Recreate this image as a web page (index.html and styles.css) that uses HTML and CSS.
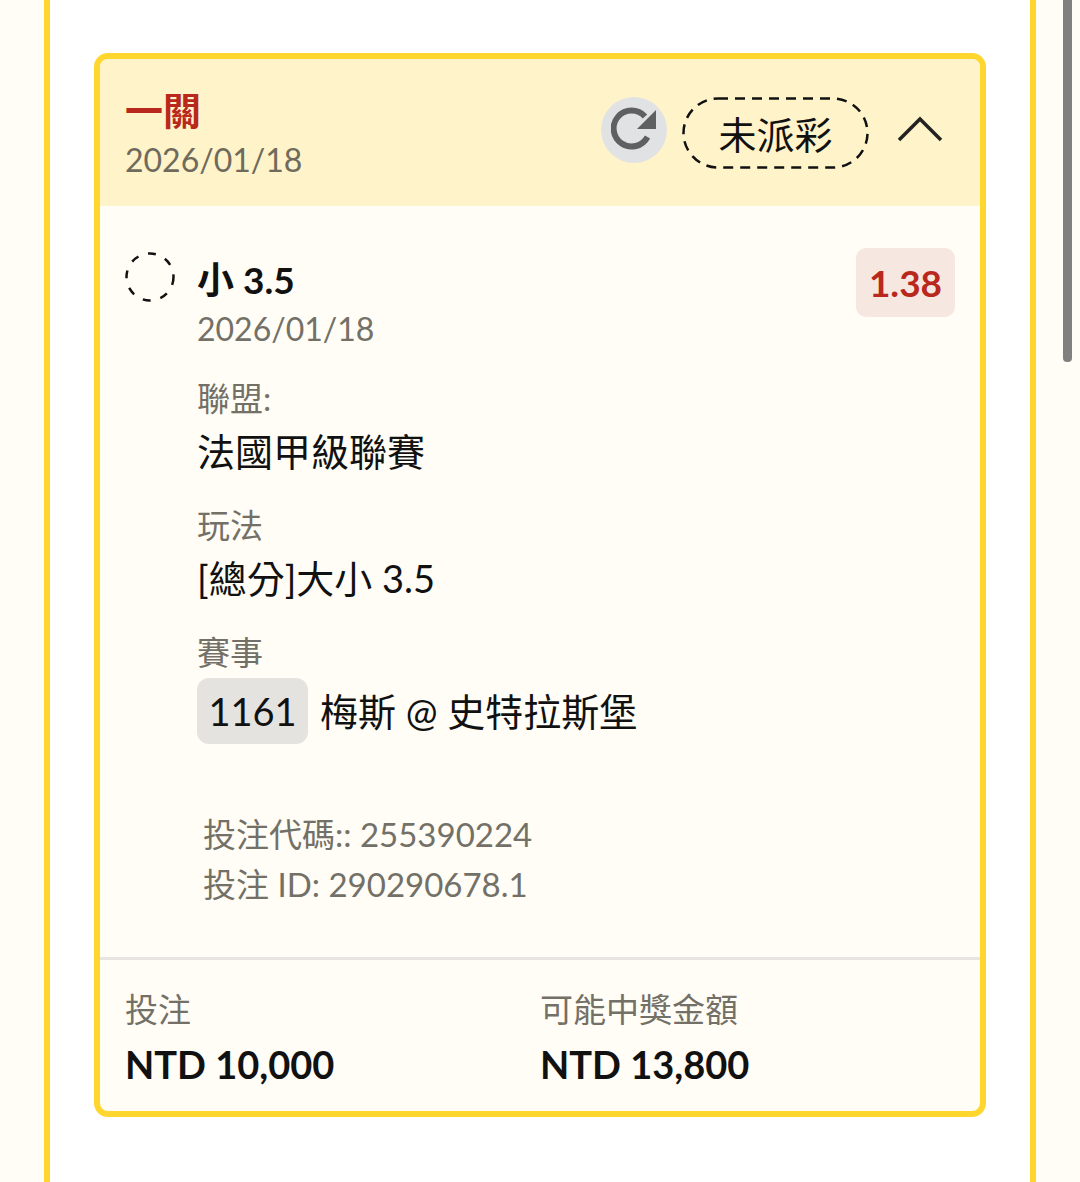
FILE: index.html
```html
<!DOCTYPE html>
<html>
  <head>
    <meta charset="utf-8">
    <meta name="viewport" content="width=device-width, initial-scale=1">
    <title>Bet</title>
    <link rel="stylesheet" href="styles.css">
  </head>
  <body>
    <div class="scrollbar"></div>
    <div class="panel">
      <div class="card">
        <div class="card-head">
          <div class="head-left">
            <p class="bet-type">一關</p>
            <p class="head-date">2026/01/18</p>
          </div>
          <div class="head-right">
            <span class="refresh">
              <svg width="46" height="46" viewBox="0 0 46 46">
                <path d="M36.5 30A18 18 0 1 1 34 9.500" fill="none" stroke="#5f6062" stroke-width="6"/>
                <path d="M45 3V22H26Z" fill="#5f6062"/>
              </svg>
            </span>
            <span class="status">
              <svg class="status-line" width="187" height="72" viewBox="0 0 187 72">
                <rect x="1.500" y="1.500" width="184" height="69" rx="34.500" fill="none" stroke="#111" stroke-width="2.500" stroke-dasharray="10 7"/>
              </svg>
              未派彩
            </span>
            <svg class="chevron" width="48" height="26" viewBox="0 0 48 26">
              <path d="M3 24L24 3L45 24" fill="none" stroke="#222" stroke-width="3.500"/>
            </svg>
          </div>
        </div>
        <div class="card-body">
          <div class="selection">
            <svg class="pending" width="50" height="50" viewBox="0 0 50 50">
              <circle cx="25" cy="25" r="23.500" fill="none" stroke="#111" stroke-width="2.500" stroke-dasharray="8 10"/>
            </svg>
            <div class="selection-main">
              <div class="selection-top">
                <div>
                  <p class="pick">小 3.5</p>
                  <p class="pick-date">2026/01/18</p>
                </div>
                <span class="odds">1.38</span>
              </div>
              <p class="label">聯盟:</p>
              <p class="value">法國甲級聯賽</p>
              <p class="label">玩法</p>
              <p class="value">[總分]大小 3.5</p>
              <p class="label">賽事</p>
              <div class="match">
                <span class="match-no">1161</span>
                <span class="value">梅斯 @ 史特拉斯堡</span>
              </div>
              <div class="codes">
                <p>投注代碼:: 255390224</p>
                <p>投注 ID: 290290678.1</p>
              </div>
            </div>
          </div>
        </div>
        <div class="card-foot">
          <div class="foot-col">
            <p class="foot-label">投注</p>
            <p class="foot-value">NTD 10,000</p>
          </div>
          <div class="foot-col">
            <p class="foot-label">可能中獎金額</p>
            <p class="foot-value">NTD 13,800</p>
          </div>
        </div>
      </div>
    </div>
  </body>
</html>
```

FILE: styles.css
```css
* {
  box-sizing: border-box;
  font-family: Lato, "Noto Sans CJK TC", sans-serif;
}

html, body {
  margin: 0;
  height: 1182px;
  overflow: hidden;
}

body {
  background-color: #fffdf6;
  padding: 0 44px;
  position: relative;
}

p {
  margin: 0;
}

.scrollbar {
  position: absolute;
  top: 0;
  left: 1063px;
  width: 9px;
  height: 362px;
  background-color: #808080;
  border-radius: 0 0 4px 4px;
}

.panel {
  width: 992px;
  height: 1182px;
  background-color: #fff;
  border-left: 6px solid #ffd62e;
  border-right: 6px solid #ffd62e;
  padding: 53px 44px 0;
}

.card {
  height: 1064px;
  background-color: #fffdf5;
  border: 6px solid #ffd62e;
  border-radius: 14px;
  overflow: hidden;
  display: flex;
  flex-direction: column;
}

.card-head {
  height: 147px;
  background-color: #fff3c9;
  padding: 0 36px 0 25px;
  display: flex;
  justify-content: space-between;
  align-items: center;
}

.head-left {
  padding-top: 4px;
}

.bet-type {
  color: #b9281c;
  font-size: 38px;
  font-weight: bold;
  line-height: 48px;
}

.head-date {
  color: #6f6a5c;
  font-size: 32px;
  line-height: 48px;
  margin-top: 2px;
}

.head-right {
  display: flex;
  align-items: center;
}

.refresh {
  width: 66px;
  height: 66px;
  border-radius: 50%;
  background-color: #e1e2e3;
  display: flex;
  align-items: center;
  justify-content: center;
  margin-bottom: 6px;
}

.status {
  position: relative;
  margin-left: 15px;
  width: 187px;
  height: 72px;
  font-size: 38px;
  color: #111;
  display: flex;
  align-items: center;
  justify-content: center;
}

.status-line {
  position: absolute;
  top: 0;
  left: 0;
}

.chevron {
  margin-left: 27px;
  margin-bottom: 8px;
}

.card-body {
  flex: 1;
  padding: 42px 25px 0;
}

.selection {
  display: flex;
}

.pending {
  flex-shrink: 0;
  margin-top: 4px;
}

.selection-main {
  flex: 1;
  margin-left: 22px;
}

.selection-top {
  display: flex;
  justify-content: space-between;
  align-items: flex-start;
}

.pick {
  color: #111;
  font-size: 37px;
  font-weight: bold;
  line-height: 48px;
  margin-top: 8px;
}

.pick-date {
  color: #737067;
  font-size: 32px;
  line-height: 48px;
  margin-top: 1px;
}

.odds {
  width: 99px;
  height: 69px;
  background-color: #f6e7e1;
  color: #b9281c;
  border-radius: 10px;
  font-size: 37px;
  font-weight: bold;
  display: flex;
  align-items: center;
  justify-content: center;
}

.label {
  color: #737067;
  font-size: 33px;
  line-height: 48px;
  margin-top: 21px;
}

.value {
  color: #111;
  font-size: 38px;
  line-height: 58px;
}

.match {
  display: flex;
  align-items: center;
  gap: 12px;
  margin-top: 2px;
}

.match-no {
  background-color: #e4e3df;
  color: #111;
  border-radius: 12px;
  font-size: 38px;
  width: 111px;
  height: 66px;
  display: flex;
  align-items: center;
  justify-content: center;
}

.codes {
  color: #737067;
  font-size: 33px;
  line-height: 50px;
  margin: 65px 0 0 6px;
}

.card-foot {
  border-top: 3px solid #e6e5e1;
  height: 154px;
  padding: 24px 25px 0;
  display: flex;
}

.foot-col {
  width: 416px;
}

.foot-label {
  color: #737067;
  font-size: 33px;
  line-height: 50px;
}

.foot-value {
  color: #111;
  font-size: 38px;
  font-weight: bold;
  line-height: 60px;
}
```
